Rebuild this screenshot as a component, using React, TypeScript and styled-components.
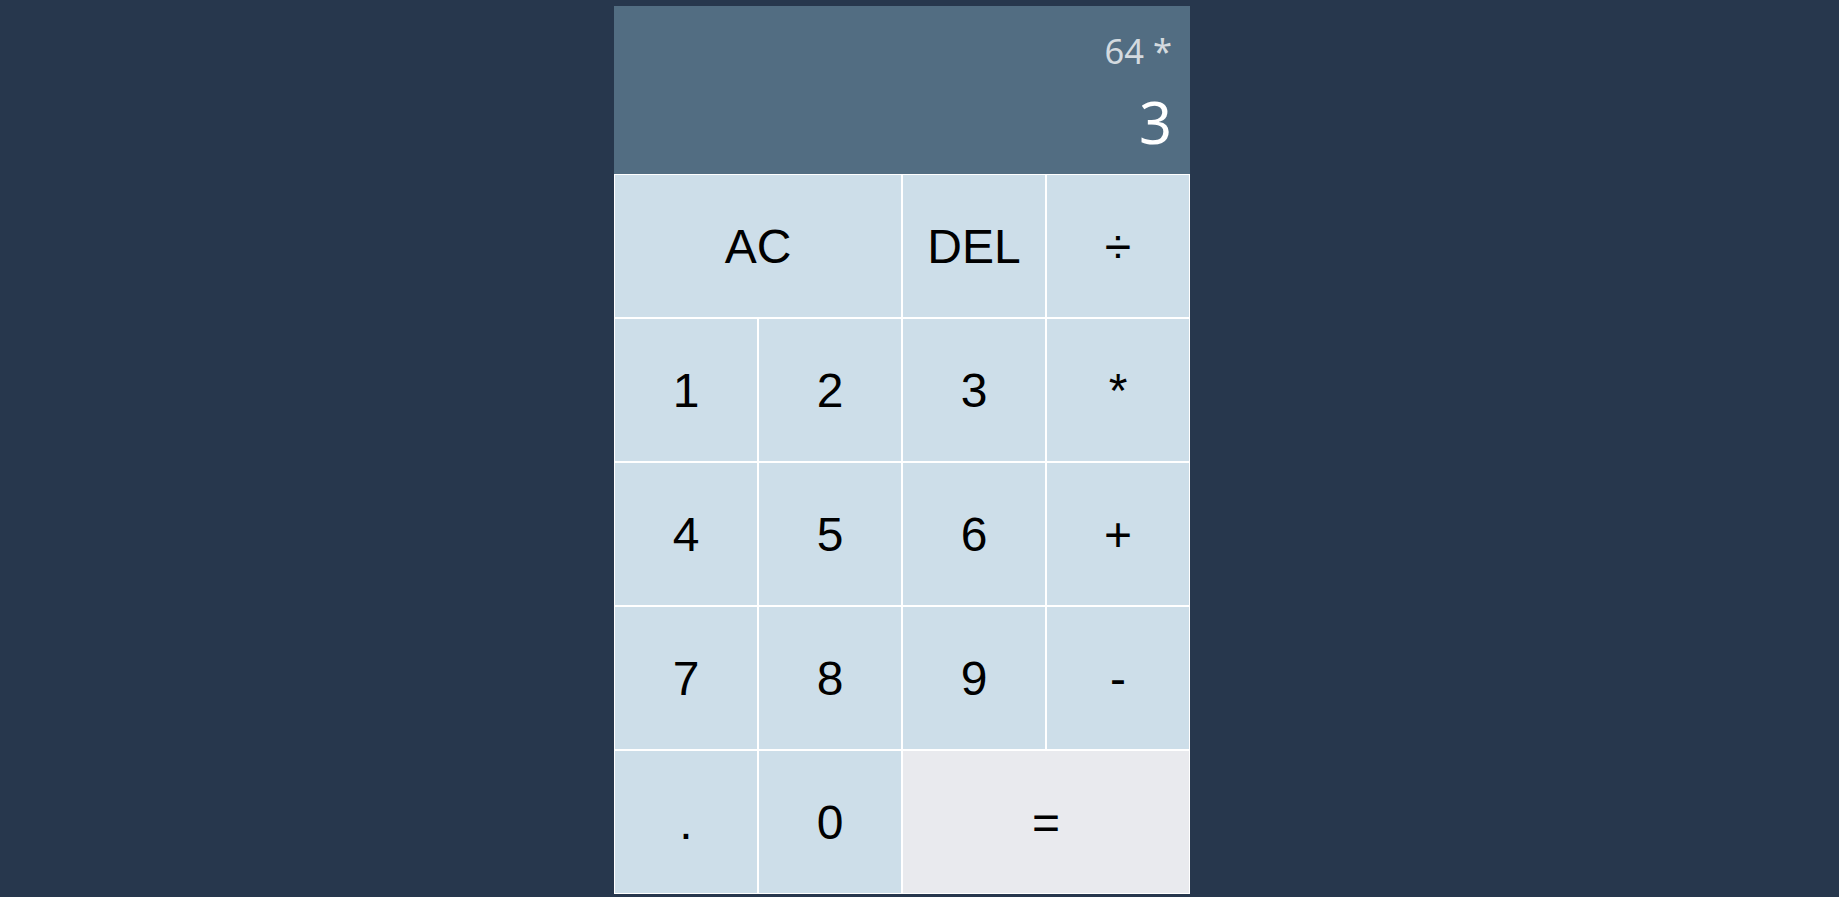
import React from "react";
import styled, { createGlobalStyle } from "styled-components";

const Global = createGlobalStyle`
  *, *::before, *::after { box-sizing: border-box; }
  html, body { margin: 0; padding: 0; }
  body {
    background: #27374d;
    font-family: "Liberation Sans", Arial, sans-serif;
  }
`;

const Page = styled.div`
  min-height: 897px;
  display: grid;
  justify-content: center;
  align-content: start;
  padding: 6px 35px 0 0;
`;

const Calculator = styled.div`
  display: grid;
  grid-template-columns: repeat(4, 144px);
  grid-template-rows: 168px repeat(5, 144px);
`;

const Output = styled.div`
  grid-column: 1 / -1;
  background: #526d82;
  display: flex;
  flex-direction: column;
  align-items: flex-end;
  justify-content: space-around;
  padding: 17px 18px 11px 15px;
  font-family: "Noto Sans", "Open Sans", sans-serif;
`;

const Previous = styled.div`
  color: rgba(255, 255, 255, 0.75);
  font-size: 34.5px;
  line-height: 1.2;
`;

const Current = styled.div`
  color: #ffffff;
  font-size: 57.6px;
  line-height: 1.2;
`;

const Key = styled.button<{ $span?: number; $light?: boolean }>`
  grid-column: span ${(p) => p.$span ?? 1};
  font-family: "Liberation Sans", Arial, sans-serif;
  font-size: 48px;
  color: #000;
  border: 1px solid #ffffff;
  outline: none;
  background: ${(p) => (p.$light ? "#e9eaee" : "#cddee9")};
  cursor: pointer;
  padding: 0;
  margin: 0;
`;

export default function App() {
  return (
    <>
      <Global />
      <Page>
        <Calculator>
          <Output>
            <Previous>64 *</Previous>
            <Current>3</Current>
          </Output>
          <Key $span={2}>AC</Key>
          <Key>DEL</Key>
          <Key>÷</Key>
          <Key>1</Key>
          <Key>2</Key>
          <Key>3</Key>
          <Key>*</Key>
          <Key>4</Key>
          <Key>5</Key>
          <Key>6</Key>
          <Key>+</Key>
          <Key>7</Key>
          <Key>8</Key>
          <Key>9</Key>
          <Key>-</Key>
          <Key>.</Key>
          <Key>0</Key>
          <Key $span={2} $light>=</Key>
        </Calculator>
      </Page>
    </>
  );
}
